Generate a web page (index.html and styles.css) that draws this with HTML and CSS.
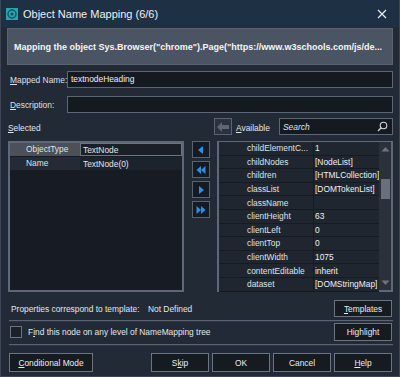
FILE: index.html
```html
<!DOCTYPE html>
<html>
<head>
<meta charset="utf-8">
<link rel="stylesheet" href="styles.css">
</head>
<body>
<div class="win">
  <div class="titlebar">
    <svg class="appicon" width="12" height="12" viewBox="0 0 12 12">
      <rect x="0" y="0" width="12" height="12" fill="#2aa3b3"/>
      <circle cx="6" cy="6" r="4" fill="none" stroke="#0d5560" stroke-width="1.4"/>
      <circle cx="6" cy="6" r="1.6" fill="#0d5560"/>
    </svg>
    <span class="title">Object Name Mapping (6/6)</span>
    <svg class="close" width="10" height="10" viewBox="0 0 10 10">
      <path d="M1 1L9 9M9 1L1 9" stroke="#e8ecf0" stroke-width="1.2"/>
    </svg>
  </div>
  <div class="content">
    <div class="banner">Mapping the object Sys.Browser("chrome").Page("https://www.w3schools.com/js/de...</div>

    <div class="field first">
      <label class="flabel"><u>M</u>apped Name:</label>
      <div class="input">textnodeHeading</div>
    </div>
    <div class="field second">
      <label class="flabel"><u>D</u>escription:</label>
      <div class="input"></div>
    </div>

    <div class="listhead">
      <div class="lh-left"><u>S</u>elected</div>
      <div class="lh-right">
        <div class="backbtn">
          <svg width="12" height="10" viewBox="0 0 12 10"><path d="M0 5L5 0V3H12V7H5V10Z" fill="#5d6672"/></svg>
        </div>
        <span class="avail"><u>A</u>vailable</span>
        <div class="search">
          <span class="ph">Search</span>
          <svg width="11" height="11" viewBox="0 0 11 11"><circle cx="6.5" cy="4.5" r="3.3" fill="none" stroke="#cfd5dc" stroke-width="1.1"/><path d="M4.2 6.8L1 10" stroke="#cfd5dc" stroke-width="1.3"/></svg>
        </div>
      </div>
    </div>

    <div class="lists">
      <div class="seltable">
        <div class="srow">
          <div class="sk active">ObjectType</div>
          <div class="sv focus">TextNode</div>
        </div>
        <div class="srow">
          <div class="sk">Name</div>
          <div class="sv">TextNode(0)</div>
        </div>
      </div>

      <div class="arrows">
        <div class="abtn"><svg width="8" height="10" viewBox="0 0 8 10"><path d="M6 1V9L1 5Z" fill="#2e8fea"/></svg></div>
        <div class="abtn"><svg width="10" height="10" viewBox="0 0 10 10"><path d="M5 1V9L0.5 5Z M9.5 1V9L5 5Z" fill="#2e8fea"/></svg></div>
        <div class="abtn"><svg width="8" height="10" viewBox="0 0 8 10"><path d="M2 1V9L7 5Z" fill="#2e8fea"/></svg></div>
        <div class="abtn"><svg width="10" height="10" viewBox="0 0 10 10"><path d="M0.5 1V9L5 5Z M5 1V9L9.5 5Z" fill="#2e8fea"/></svg></div>
      </div>

      <div class="availtable">
        <div class="rows">
          <div class="arow"><span class="ak">childElementC...</span><span class="av">1</span></div>
          <div class="arow"><span class="ak">childNodes</span><span class="av">[NodeList]</span></div>
          <div class="arow"><span class="ak">children</span><span class="av">[HTMLCollection]</span></div>
          <div class="arow"><span class="ak">classList</span><span class="av">[DOMTokenList]</span></div>
          <div class="arow"><span class="ak">className</span><span class="av"></span></div>
          <div class="arow"><span class="ak">clientHeight</span><span class="av">63</span></div>
          <div class="arow"><span class="ak">clientLeft</span><span class="av">0</span></div>
          <div class="arow"><span class="ak">clientTop</span><span class="av">0</span></div>
          <div class="arow"><span class="ak">clientWidth</span><span class="av">1075</span></div>
          <div class="arow"><span class="ak">contentEditable</span><span class="av">inherit</span></div>
          <div class="arow"><span class="ak">dataset</span><span class="av">[DOMStringMap]</span></div>
        </div>
        <div class="scrollbar">
          <svg class="sarrow" width="9" height="6" viewBox="0 0 9 6"><path d="M0.5 5.5L4.5 1L8.5 5.5Z" fill="#6b7480"/></svg>
          <div class="track"><div class="thumb"></div></div>
          <svg class="sarrow" width="9" height="6" viewBox="0 0 9 6"><path d="M0.5 0.5L4.5 5L8.5 0.5Z" fill="#6b7480"/></svg>
        </div>
      </div>
    </div>

    <div class="proprow">
      <span class="plabel">Properties correspond to template:</span>
      <span class="pval">Not Defined</span>
      <button class="btn tmpl"><u>T</u>emplates</button>
    </div>
    <div class="sep"></div>
    <div class="findrow">
      <span class="chk"></span>
      <span class="flbl">F<u>i</u>nd this node on any level of NameMapping tree</span>
      <button class="btn hl">Highlight</button>
    </div>
    <div class="sep"></div>
    <div class="btnrow">
      <button class="btn cond"><u>C</u>onditional Mode</button>
      <div class="right">
        <button class="btn std">S<u>k</u>ip</button>
        <button class="btn std">OK</button>
        <button class="btn std">Cancel</button>
        <button class="btn std"><u>H</u>elp</button>
      </div>
    </div>
  </div>
</div>
</body>
</html>
```
FILE: styles.css
```css
* { box-sizing: border-box; }
html, body {
  margin: 0;
  padding: 0;
  width: 400px;
  height: 377px;
  overflow: hidden;
  background: #222a36;
}
.win {
  width: 400px;
  height: 377px;
  background: #222a36;
  font-family: "Liberation Sans", Arial, sans-serif;
  font-size: 8.4px;
  color: #e3e6ea;
  border: 1px solid #3c4656;
  border-top: none;
}
u { text-decoration: underline; text-underline-offset: 1px; }
.titlebar {
  height: 27px;
  background: #1e3044;
  display: flex;
  align-items: center;
  padding-left: 5px;
  padding-right: 12px;
}
.appicon { margin-right: 5px; flex: none; }
.title {
  font-size: 11px;
  color: #eef1f4;
  flex: 1;
}
.close { flex: none; }
.content {
  padding: 1px 6px 0 6px;
}
.banner {
  height: 37px;
  background: #4b5462;
  border: 1px solid #59626f;
  display: flex;
  align-items: center;
  padding-left: 6px;
  font-weight: bold;
  font-size: 9px;
  color: #f4f6f8;
  white-space: nowrap;
  overflow: hidden;
}
.field {
  display: flex;
  align-items: center;
  height: 17px;
}
.field.first { margin-top: 6px; }
.field.second { margin-top: 8px; }
.flabel {
  width: 60px;
  padding-left: 3px;
  flex: none;
  color: #dde1e6;
  white-space: nowrap;
}
.input {
  flex: 1;
  height: 17px;
  background: #151a21;
  border: 1px solid #5c6676;
  padding-left: 3px;
  line-height: 15px;
  color: #eef0f3;
}
.listhead {
  margin-top: 5px;
  height: 17px;
  display: flex;
  align-items: center;
}
.lh-left { width: 209px; padding-left: 1px; padding-top: 3px; }
.lh-right { display: flex; align-items: center; flex: 1; }
.backbtn {
  width: 18px;
  height: 17px;
  border: 1px solid #5a6370;
  background: #2b323d;
  display: flex;
  align-items: center;
  justify-content: center;
}
.avail { margin-left: 4px; width: 41px; padding-top: 3px; }
.search {
  width: 114px;
  margin-left: 2px;
  height: 17px;
  border: 1px solid #5c6676;
  background: #151a21;
  display: flex;
  align-items: center;
  justify-content: space-between;
  padding: 0 4px 0 3px;
}
.ph { font-style: italic; color: #dfe3e8; }
.lists {
  margin-top: 6px;
  height: 151px;
  display: flex;
}
.seltable {
  width: 176px;
  height: 151px;
  margin-left: 1px;
  background: #171c24;
  border: 2px solid #5e6878;
}
.srow {
  display: flex;
  height: 14px;
  border-bottom: 1px solid #171c24;
}
.sk {
  width: 70px;
  padding-left: 16px;
  line-height: 13px;
  background: #242b36;
  color: #dfe3e8;
}
.sk.active { background: #4c5058; }
.sv {
  flex: 1;
  line-height: 12px;
  padding-left: 2px;
  background: #1d232c;
  border: 1px solid transparent;
}
.sv.focus { border-color: #6d7480; background: #1b2028; }
.arrows {
  width: 33px;
  display: flex;
  flex-direction: column;
  align-items: center;
  gap: 3px;
}
.abtn {
  width: 18px;
  height: 17px;
  background: #151b23;
  border: 1px solid #59626f;
  display: flex;
  align-items: center;
  justify-content: center;
}
.availtable {
  width: 176px;
  height: 151px;
  border: 1px solid #5e6878;
  border-width: 1px 2px 2px 2px;
  background: #1d232c;
  display: flex;
}
.rows { flex: 1; }
.arow {
  display: flex;
  height: 13.6px;
  align-items: center;
  border-bottom: 1px solid #161a21;
  background: #20262f;
}
.ak {
  width: 94px;
  padding-left: 28px;
  color: #dfe3e8;
  white-space: nowrap;
  overflow: hidden;
}
.av {
  flex: 1;
  padding-left: 1px;
  border-left: 1px solid #161a21;
  align-self: stretch;
  display: flex;
  align-items: center;
  color: #eef0f3;
  white-space: nowrap;
}
.scrollbar {
  width: 13px;
  background: #2a313b;
  display: flex;
  flex-direction: column;
  align-items: center;
  padding: 4px 0 4px;
}
.track { flex: 1; width: 100%; padding-top: 27px; }
.thumb {
  width: 9px;
  margin: 0 auto;
  height: 20px;
  background: #67707c;
}
.proprow {
  margin-top: 8px;
  height: 17px;
  display: flex;
  align-items: center;
}
.plabel { margin-left: 4px; width: 137px; white-space: nowrap; }
.pval { flex: 1; }
.btn {
  font-family: "Liberation Sans", Arial, sans-serif;
  font-size: 8.4px;
  color: #eaedf0;
  background: #161b22;
  border: 1px solid #6a7483;
  padding: 0;
  margin: 0;
}
.tmpl { width: 58px; height: 17px; margin-right: 1px; }
.sep {
  height: 2px;
  margin-top: 3px;
  border-top: 1px solid #5a6372;
  border-bottom: 1px solid #2c3440;
  margin-left: 2px;
}
.findrow {
  margin-top: 1px;
  height: 18px;
  display: flex;
  align-items: center;
}
.chk {
  width: 12px;
  height: 12px;
  border: 1px solid #6a7483;
  background: #1b2029;
  margin-left: 3px;
  margin-right: 6px;
}
.flbl { flex: 1; white-space: nowrap; }
.hl { width: 58px; height: 18px; margin-right: 1px; }
.btnrow {
  margin-top: 7px;
  display: flex;
  align-items: center;
}
.cond { width: 84px; height: 19px; margin-left: 2px; }
.right { margin-left: auto; display: flex; gap: 3px; margin-right: 1px; }
.std { width: 58px; height: 19px; }
```
